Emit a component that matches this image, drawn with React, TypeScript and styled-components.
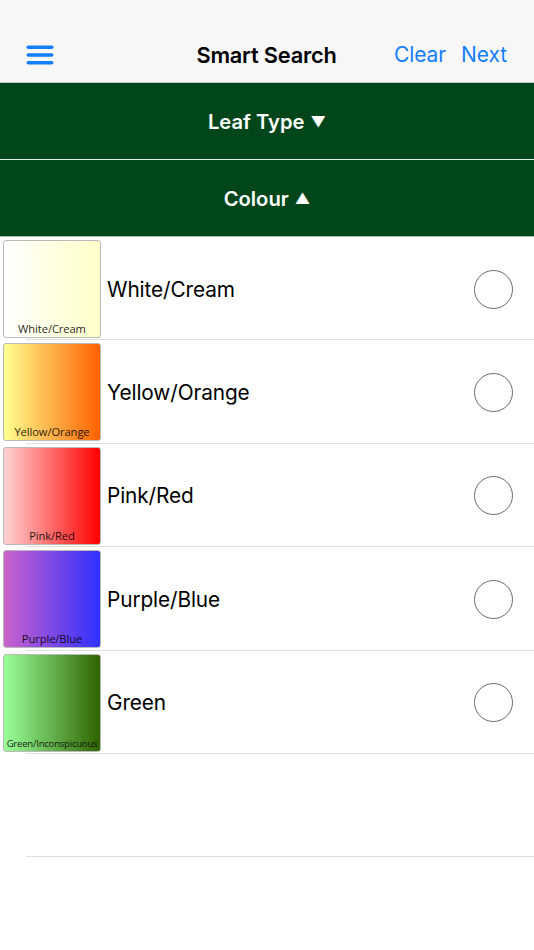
import * as React from 'react';
import styled, { createGlobalStyle } from 'styled-components';

const GlobalStyle = createGlobalStyle`
  html, body {
    margin: 0;
    padding: 0;
    background: #ffffff;
  }
  body {
    font-family: Inter, "Noto Sans", "Liberation Sans", sans-serif;
    -webkit-font-smoothing: antialiased;
  }
`;

const Screen = styled('div')`
  width: 534px;
  min-height: 950px;
  background: #ffffff;
  display: flex;
  flex-direction: column;
`;

const NavBar = styled('div')`
  box-sizing: border-box;
  height: 83px;
  padding: 27px 27px 0 26px;
  background: #f7f7f7;
  border-bottom: 1px solid #c4c4c4;
  display: grid;
  grid-template-columns: 1fr auto 1fr;
  align-items: center;
`;

const MenuButton = styled('div')`
  display: flex;
  align-items: center;
  justify-self: start;
`;

const Title = styled('div')`
  font-size: 21.8px;
  font-weight: 600;
  color: #000;
  letter-spacing: -0.2px;
`;

const NavActions = styled('div')`
  justify-self: end;
  display: flex;
  gap: 15px;
`;

const NavLink = styled('span')`
  font-size: 21px;
  font-weight: 400;
  color: #157efb;
  letter-spacing: -0.1px;
`;

const SectionHeader = styled('div')<{ $divider?: boolean }>`
  box-sizing: border-box;
  height: 77px;
  background: #00461a;
  border-bottom: 1px solid ${(p) => (p.$divider ? '#e6ece7' : '#9fbda6')};
  display: flex;
  align-items: center;
  justify-content: center;
  color: #ffffff;
  font-size: 20.2px;
  font-weight: 600;
  gap: 6px;
`;

const Caret = styled('span')`
  font-size: 15px;
  line-height: 1;
`;

const List = styled('div')`
  display: flex;
  flex-direction: column;
`;

const Row = styled('div')`
  box-sizing: border-box;
  height: 102.4px;
  padding: 3px 21px 0 3px;
  display: flex;
  align-items: flex-start;
`;

const Divider = styled('div')`
  height: 1px;
  margin-left: 26px;
  background: #e0e0e0;
`;

const Swatch = styled('div')<{ $from: string; $to: string }>`
  box-sizing: border-box;
  width: 98px;
  height: 98px;
  flex: none;
  border: 1px solid #b9b9b9;
  border-radius: 3px;
  background: linear-gradient(to right, ${(p) => p.$from}, ${(p) => p.$to});
  display: flex;
  align-items: flex-end;
  justify-content: center;
  padding-bottom: 1px;
`;

const SwatchLabel = styled('span')<{ $small?: boolean }>`
  font-family: "Open Sans", "Noto Sans", sans-serif;
  font-size: ${(p) => (p.$small ? 9.6 : 11.2)}px;
  font-weight: 500;
  color: rgba(0, 0, 0, 0.88);
  white-space: nowrap;
  letter-spacing: ${(p) => (p.$small ? '-0.25px' : '-0.1px')};
`;

const RowBody = styled('div')`
  flex: 1;
  height: 98px;
  display: flex;
  align-items: center;
  padding-left: 6px;
`;

const Label = styled('span')`
  flex: 1;
  font-size: 20.8px;
  color: #000;
  letter-spacing: -0.1px;
`;

const Radio = styled('div')`
  box-sizing: border-box;
  width: 39px;
  height: 39px;
  border-radius: 50%;
  border: 1.5px solid #6b6b6b;
`;

const EmptyRow = styled('div')`
  height: 102.4px;
`;

const colours = [
  { name: 'White/Cream', tag: 'White/Cream', from: '#ffffff', to: '#ffffc8' },
  { name: 'Yellow/Orange', tag: 'Yellow/Orange', from: '#ffff90', to: '#ff6100' },
  { name: 'Pink/Red', tag: 'Pink/Red', from: '#ffd2d2', to: '#ff0000' },
  { name: 'Purple/Blue', tag: 'Purple/Blue', from: '#cc62cc', to: '#3030ff' },
  { name: 'Green', tag: 'Green/Inconspicuous', from: '#9aff9a', to: '#2f6400', small: true },
];

const MenuIcon = () => (
  <svg width="28" height="20" viewBox="0 0 28 20">
    <rect x="0.5" y="0.5" width="27" height="3.6" rx="1.8" fill="#157efb" />
    <rect x="0.5" y="8.2" width="27" height="3.6" rx="1.8" fill="#157efb" />
    <rect x="0.5" y="15.9" width="27" height="3.6" rx="1.8" fill="#157efb" />
  </svg>
);

export default function App() {
  return (
    <Screen>
      <GlobalStyle />
      <NavBar>
        <MenuButton>
          <MenuIcon />
        </MenuButton>
        <Title>Smart Search</Title>
        <NavActions>
          <NavLink>Clear</NavLink>
          <NavLink>Next</NavLink>
        </NavActions>
      </NavBar>
      <SectionHeader $divider>
        Leaf Type <Caret>▼</Caret>
      </SectionHeader>
      <SectionHeader>
        Colour <Caret>▲</Caret>
      </SectionHeader>
      <List>
        {colours.map((c) => (
          <React.Fragment key={c.name}>
            <Row>
              <Swatch $from={c.from} $to={c.to}>
                <SwatchLabel $small={c.small}>{c.tag}</SwatchLabel>
              </Swatch>
              <RowBody>
                <Label>{c.name}</Label>
                <Radio />
              </RowBody>
            </Row>
            <Divider />
          </React.Fragment>
        ))}
        <EmptyRow />
        <Divider />
      </List>
    </Screen>
  );
}
